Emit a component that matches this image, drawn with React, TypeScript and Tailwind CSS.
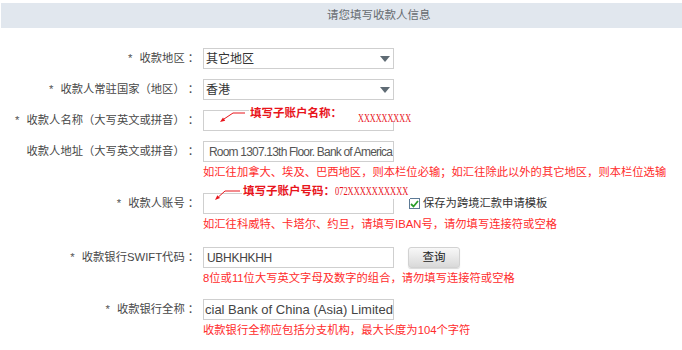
import React from "react";

function Label({ star, text }: { star?: boolean; text: string }) {
  return (
    <div className="w-[199px] h-[21px] shrink-0 flex items-center justify-end text-[11.3px] text-[#474747] whitespace-nowrap">
      {star && <span className="mr-[7px] text-[#555]">*</span>}
      <span>{text}</span>
      <span className="ml-[3px]">：</span>
    </div>
  );
}

function Hint({ children }: { children: React.ReactNode }) {
  return (
    <div className="mt-[2px] h-[16px] leading-[16px] text-[11.3px] text-[#ff2b2b] whitespace-nowrap">
      {children}
    </div>
  );
}

function Select({ value }: { value: string }) {
  return (
    <div className="w-[191px] h-[21px] border border-[#cfcfcf] bg-white flex items-center justify-between pl-[2px] pr-[3px]">
      <span className="text-[12px] text-[#333]">{value}</span>
      <svg width="10" height="6" viewBox="0 0 10 6">
        <polygon points="0,0 10,0 5,6" fill="#5f6b74" />
      </svg>
    </div>
  );
}

export default function App() {
  return (
    <div className="w-[682px] h-[350px] bg-white overflow-hidden font-['Liberation_Sans','Noto_Sans_CJK_SC',sans-serif]">
      <div className="mt-[3px] ml-[1px] h-[25px] bg-[#e1e7ee] flex items-center pl-[326px] text-[11.5px] text-[#666b70]">
        请您填写收款人信息
      </div>

      <div className="mt-[20px] flex flex-col">
        {/* row 1 */}
        <div className="flex items-start">
          <Label star text="收款地区" />
          <div className="ml-[4px]">
            <Select value="其它地区" />
          </div>
        </div>

        {/* row 2 */}
        <div className="flex items-start mt-[10px]">
          <Label star text="收款人常驻国家（地区）" />
          <div className="ml-[4px]">
            <Select value="香港" />
          </div>
        </div>

        {/* row 3 */}
        <div className="flex items-start mt-[10px]">
          <Label star text="收款人名称（大写英文或拼音）" />
          <div className="ml-[4px] relative">
            <div className="w-[191px] h-[21px] border border-[#cfcfcf] bg-white" />
            <svg
              className="absolute left-0 top-0 overflow-visible"
              width="45"
              height="15"
              viewBox="0 0 45 15"
            >
              <polyline points="42,3 30,3 21,9" fill="none" stroke="#e8141b" strokeWidth="1" />
              <polygon points="17,12 22.2,10.8 20,7.5" fill="#e8141b" />
            </svg>
            <div className="absolute left-[46px] top-[-5px] h-[16px] w-[170px] flex items-center whitespace-nowrap">
              <span className="bg-white pl-[1px] text-[11.5px] leading-[16px] font-bold text-[#e8141b]">
                填写子账户名称：
              </span>
              <span className="bg-white w-[16px] h-[16px]" />
              <span className="bg-white h-[16px] w-[54px] overflow-visible">
                <span className="inline-block origin-left scale-x-[0.68] text-[12px] leading-[16px] text-[#e8141b] font-['Liberation_Serif',serif]">
                  XXXXXXXXX
                </span>
              </span>
            </div>
          </div>
        </div>

        {/* row 4 */}
        <div className="flex items-start mt-[10px]">
          <Label text="收款人地址（大写英文或拼音）" />
          <div className="ml-[4px] flex flex-col">
            <div className="w-[191px] h-[21px] border border-[#cfcfcf] bg-white flex items-center pl-[5px] overflow-hidden">
              <span className="text-[12px] tracking-[-0.8px] text-[#555] whitespace-nowrap">
                Room 1307.13th Floor. Bank of America
              </span>
            </div>
            <Hint>如汇往加拿大、埃及、巴西地区，则本栏位必输；如汇往除此以外的其它地区，则本栏位选输</Hint>
          </div>
        </div>

        {/* row 5 */}
        <div className="flex items-start mt-[13px]">
          <Label star text="收款人账号" />
          <div className="ml-[4px] flex flex-col">
            <div className="flex items-center">
              <div className="relative">
                <div className="w-[191px] h-[21px] border border-[#cfcfcf] bg-white" />
                <svg
                  className="absolute left-0 top-0 overflow-visible"
                  width="40"
                  height="10"
                  viewBox="0 0 40 10"
                >
                  <polyline points="37,-2 22,-2 15.7,3.7" fill="none" stroke="#e8141b" strokeWidth="1" />
                  <polygon points="12,7 17,5.1 14.4,2.2" fill="#e8141b" />
                </svg>
                <div className="absolute left-[39px] top-[-10px] h-[16px] w-[168px] flex items-center whitespace-nowrap bg-white">
                  <span className="pl-[1px] text-[11.5px] leading-[16px] font-bold text-[#e8141b]">
                    填写子账户号码：
                  </span>
                  <span className="inline-block origin-left scale-x-[0.7] text-[12px] leading-[16px] text-[#e8141b] font-['Liberation_Serif',serif]">
                    072XXXXXXXXXX
                  </span>
                </div>
              </div>
              <span className="ml-[15px] w-[11px] h-[11px] border border-[#5d7a96] bg-white flex items-center justify-center">
                <svg width="9" height="8" viewBox="0 0 9 8">
                  <polyline points="1,4 3.5,6.5 8,1" fill="none" stroke="#2a9d2a" strokeWidth="1.8" />
                </svg>
              </span>
              <span className="ml-[3px] text-[11.3px] text-[#333] whitespace-nowrap">保存为跨境汇款申请模板</span>
            </div>
            <Hint>如汇往科威特、卡塔尔、约旦，请填写IBAN号，请勿填写连接符或空格</Hint>
          </div>
        </div>

        {/* row 6 */}
        <div className="flex items-start mt-[15px]">
          <Label star text="收款银行SWIFT代码" />
          <div className="ml-[4px] flex flex-col">
            <div className="flex items-center">
              <div className="w-[191px] h-[21px] border border-[#cfcfcf] bg-white flex items-center pl-[3px]">
                <span className="text-[12px] tracking-[-0.3px] text-[#444]">UBHKHKHH</span>
              </div>
              <button className="ml-[14px] w-[52px] h-[21px] rounded-[3px] border border-[#d2d2d2] bg-linear-to-b from-[#f8f8f8] to-[#d9d9d9] shadow-[0_1px_1px_rgba(0,0,0,0.15)] flex items-center justify-center text-[11.5px] text-[#222]">
                查询
              </button>
            </div>
            <Hint>8位或11位大写英文字母及数字的组合，请勿填写连接符或空格</Hint>
          </div>
        </div>

        {/* row 7 */}
        <div className="flex items-start mt-[13px]">
          <Label star text="收款银行全称" />
          <div className="ml-[4px] flex flex-col">
            <div className="w-[191px] h-[21px] border border-[#cfcfcf] bg-white flex items-center pl-[1px] overflow-hidden">
              <span className="text-[13px] text-[#444] whitespace-nowrap">cial Bank of China (Asia) Limited</span>
            </div>
            <Hint>收款银行全称应包括分支机构，最大长度为104个字符</Hint>
          </div>
        </div>
      </div>
    </div>
  );
}
